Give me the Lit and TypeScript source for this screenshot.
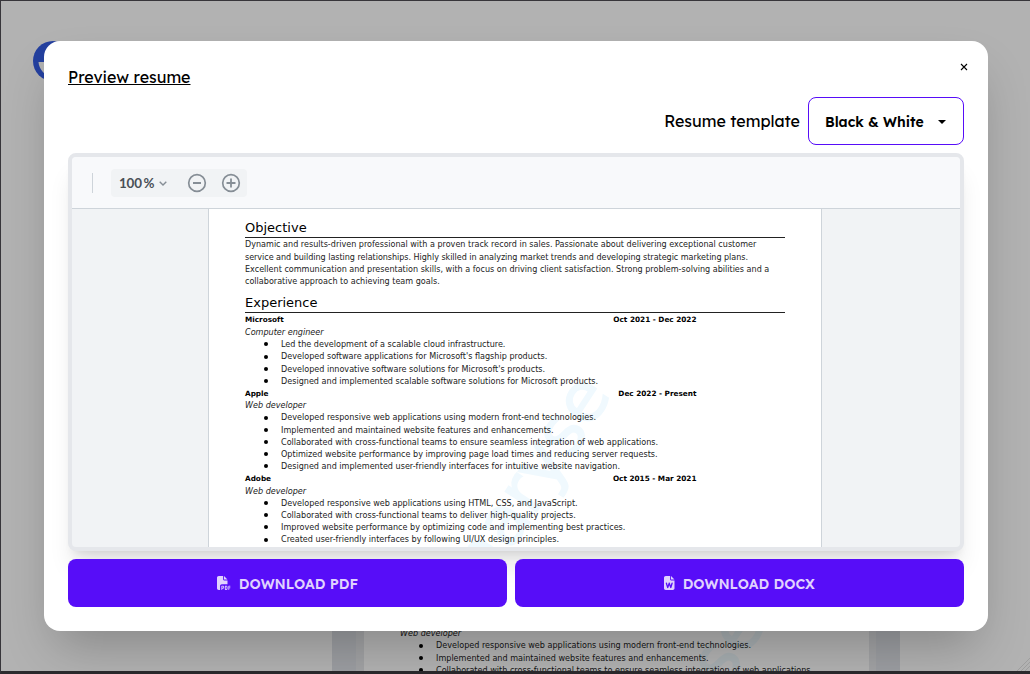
import { LitElement, html, css } from "lit";
import { customElement, property } from "lit/decorators.js";

interface Job { company: string; dates: string; role: string; points: string[]; }

const OBJECTIVE = [
  "Dynamic and results-driven professional with a proven track record in sales. Passionate about delivering exceptional customer",
  "service and building lasting relationships. Highly skilled in analyzing market trends and developing strategic marketing plans.",
  "Excellent communication and presentation skills, with a focus on driving client satisfaction. Strong problem-solving abilities and a",
  "collaborative approach to achieving team goals.",
];

const JOBS: Job[] = [
  {
    company: "Microsoft", dates: "Oct 2021 - Dec 2022", role: "Computer engineer",
    points: [
      "Led the development of a scalable cloud infrastructure.",
      "Developed software applications for Microsoft's flagship products.",
      "Developed innovative software solutions for Microsoft's products.",
      "Designed and implemented scalable software solutions for Microsoft products.",
    ],
  },
  {
    company: "Apple", dates: "Dec 2022 - Present", role: "Web developer",
    points: [
      "Developed responsive web applications using modern front-end technologies.",
      "Implemented and maintained website features and enhancements.",
      "Collaborated with cross-functional teams to ensure seamless integration of web applications.",
      "Optimized website performance by improving page load times and reducing server requests.",
      "Designed and implemented user-friendly interfaces for intuitive website navigation.",
    ],
  },
  {
    company: "Adobe", dates: "Oct 2015 - Mar 2021", role: "Web developer",
    points: [
      "Developed responsive web applications using HTML, CSS, and JavaScript.",
      "Collaborated with cross-functional teams to deliver high-quality projects.",
      "Improved website performance by optimizing code and implementing best practices.",
      "Created user-friendly interfaces by following UI/UX design principles.",
    ],
  },
];

const PDF_ICON = "M0 64C0 28.7 28.7 0 64 0H224V128c0 17.7 14.3 32 32 32H384V304H176c-35.3 0-64 28.7-64 64V512H64c-35.3 0-64-28.7-64-64V64zm384 64H256V0L384 128zM176 352h32c30.9 0 56 25.1 56 56s-25.1 56-56 56H192v32c0 8.8-7.2 16-16 16s-16-7.2-16-16V448 368c0-8.8 7.2-16 16-16zm32 80c13.3 0 24-10.7 24-24s-10.7-24-24-24H192v48h16zm96-80h32c26.5 0 48 21.5 48 48v64c0 26.5-21.5 48-48 48H304c-8.8 0-16-7.2-16-16V368c0-8.8 7.2-16 16-16zm32 128c8.8 0 16-7.2 16-16V400c0-8.8-7.2-16-16-16H320v96h16zm80-112c0-8.8 7.2-16 16-16h48c8.8 0 16 7.2 16 16s-7.2 16-16 16H448v32h32c8.8 0 16 7.2 16 16s-7.2 16-16 16H448v48c0 8.8-7.2 16-16 16s-16-7.2-16-16V432 368z";
const WORD_ICON = "M64 0C28.7 0 0 28.7 0 64V448c0 35.3 28.7 64 64 64H320c35.3 0 64-28.7 64-64V160H256c-17.7 0-32-14.3-32-32V0H64zM256 0V128H384L256 0zM111 257.1l26.8 89.2 31.6-90.3c3.4-9.6 12.5-16.1 22.7-16.1s19.3 6.4 22.7 16.1l31.6 90.3L273 257.1c3.8-12.7 17.2-19.9 29.9-16.1s19.9 17.2 16.1 29.9l-48 160c-3 10-12.1 16.9-22.4 17.1s-19.8-6.2-23.2-16.1L192 336.6l-33.3 95.3c-3.4 9.8-12.8 16.3-23.2 16.1s-19.5-7.1-22.4-17.1l-48-160c-3.8-12.7 3.4-26.1 16.1-29.9s26.1 3.4 29.9 16.1z";

@customElement("resume-job")
class ResumeJob extends LitElement {
  @property({ attribute: false }) job!: Job;
  static styles = css`
    :host { display: block; font: 8.08px/12.2px "DejaVu Sans", sans-serif; white-space: nowrap; color: #1b1b1b; }
    .head { display: flex; justify-content: space-between; width: 451.5px; padding-top: .7px; margin-bottom: -.7px; font: bold 7.3px/12.2px "DejaVu Sans", sans-serif; color: #000; }
    .role { font-style: italic; }
    ul { margin: 0; padding: 0; list-style: none; }
    li { display: flex; align-items: center; gap: 13px; padding-left: 19px; }
    li::before { content: ""; width: 4px; height: 4px; border-radius: 50%; background: #000; }
  `;
  render() {
    return html`
      <div class="head"><span>${this.job.company}</span><span>${this.job.dates}</span></div>
      <div class="role">${this.job.role}</div>
      <ul>${this.job.points.map((p) => html`<li>${p}</li>`)}</ul>`;
  }
}

@customElement("resume-page")
class ResumePage extends LitElement {
  static styles = css`
    :host { display: block; position: relative; box-sizing: border-box; width: 612px; padding: 9px 36px 0; background: #fff; overflow: hidden; }
    h2 { position: relative; margin: 0; font: 13px/19px "DejaVu Sans", sans-serif; color: #000; border-bottom: 1px solid #222; }
    .copy { position: relative; font: 8.07px/12.2px "DejaVu Sans", sans-serif; color: #1b1b1b; white-space: nowrap; padding: 1.4px 0 4.8px; }
    .copy div:nth-child(2) { letter-spacing: -.04px; }
    .jobs { position: relative; padding-top: .8px; }
    .mark { position: absolute; left: 0; top: 0; width: 612px; height: 760px; }
    .mark text { font: 68px "DejaVu Sans", sans-serif; fill: #f0f9fe; stroke: #f0f9fe; stroke-width: 1.5px; text-anchor: end; }
  `;
  render() {
    return html`
      <svg class="mark" viewBox="0 0 612 760"><text transform="translate(403.5 186) rotate(-57)">maryse</text></svg>
      <h2>Objective</h2>
      <div class="copy">${OBJECTIVE.map((l) => html`<div>${l}</div>`)}</div>
      <h2>Experience</h2>
      <div class="jobs">${JOBS.map((j) => html`<resume-job .job=${j}></resume-job>`)}</div>`;
  }
}

@customElement("app-root")
class AppRoot extends LitElement {
  static styles = css`
    :host { display: block; position: relative; box-sizing: border-box; width: 1030px; height: 674px; overflow: hidden; background: #fff; font-family: "Lexend", "Lato", sans-serif; color: #000; }
    .shade { position: absolute; inset: 0; background: rgba(0,0,0,.3); border: solid #37353a; border-width: 1px 0 3px 1px; border-bottom-color: #2b2a2d; box-sizing: border-box; }
    .logo { position: absolute; left: 33px; top: 41px; width: 40px; height: 40px; }
    .grip { position: absolute; right: 0; bottom: 3px; width: 13px; height: 13px; }
    .under { position: absolute; left: 332px; top: 300px; width: 568px; height: 371px; display: flex; background: #e0e2e8; overflow: hidden; }
    .gap { box-sizing: border-box; flex: 0 0 32px; border-right: 8px solid #e8eaed; }
    .edge { flex: 0 0 7px; background: #e8eaed; }
    .clip { width: 505px; height: 371px; overflow: hidden; display: flex; align-items: flex-start; }
    .under resume-page { flex: none; margin-top: 137px; }
    .modal { position: absolute; left: 44px; top: 41px; width: 944px; height: 590px; box-sizing: border-box; padding: 24px; border-radius: 16px; background: #fff; box-shadow: 0 25px 50px -12px rgba(0,0,0,.25); display: flex; flex-direction: column; }
    .top { display: flex; justify-content: space-between; height: 32px; }
    .title { font-size: 16px; line-height: 24px; text-decoration: underline; }
    .close { width: 8px; height: 8px; margin: -2px -4px 0 0; }
    .pick { display: flex; align-items: center; justify-content: flex-end; gap: 8px; height: 48px; }
    .label { font-size: 16px; line-height: 24px; }
    .select { box-sizing: border-box; width: 156px; height: 48px; border: 1px solid #570df8; border-radius: 8px; display: flex; align-items: center; justify-content: space-between; padding: 1px 17px 0 16px; font-weight: 600; font-size: 14px; }
    .viewer { margin-top: 8px; box-sizing: border-box; height: 398px; border: 4px solid #e5e7eb; border-radius: 8px; background: #f1f3f5; box-shadow: 0 20px 25px -5px rgba(0,0,0,.1), 0 8px 10px -6px rgba(0,0,0,.1); display: flex; flex-direction: column; overflow: hidden; }
    .bar { box-sizing: border-box; flex: 0 0 52px; background: #f8f9fb; border-bottom: 1px solid #ced4da; display: flex; align-items: center; padding-left: 20px; }
    .rule { width: 1px; height: 20px; background: #ced4da; margin-right: 18px; }
    .zoom { display: flex; align-items: center; width: 136px; height: 28px; border-radius: 4px; background: #f1f3f5; box-sizing: border-box; padding-left: 8px; color: #495057; font: 700 13.4px "Lato", sans-serif; }
    .zoom svg { flex: none; fill: none; stroke: #868e96; }
    .pct { flex: 0 0 40px; word-spacing: -1.3px; letter-spacing: -.2px; white-space: nowrap; }
    .minus { margin-left: 20px; }
    .plus { margin-left: 14px; }
    .sheet { display: flex; justify-content: center; flex: 1; min-height: 0; overflow: hidden; padding-right: 2px; }
    .sheet resume-page { box-shadow: 0 0 0 1px #ced4da; flex: none; height: 400px; }
    .buttons { display: flex; gap: 8px; margin-top: 8px; }
    .btn { box-sizing: border-box; height: 48px; padding-top: 1px; border-radius: 8px; background: #570df8; color: #e0d2fe; display: flex; align-items: center; justify-content: center; gap: 8px; font-weight: 600; font-size: 14px; }
    .btn svg { fill: #e0d2fe; margin-top: -2px; }
    .pdf { width: 439px; }
    .docx { width: 449px; }
  `;
  render() {
    return html`
      <div class="under"><div class="gap"></div><div class="clip"><resume-page></resume-page></div><div class="edge"></div></div>
      <svg class="logo" viewBox="0 0 40 40"><circle cx="20" cy="20" r="20" fill="#345ce4"/><path d="M5.5 21h20v20C12 35 6 29 5.5 21" fill="#fff"/></svg>
      <div class="shade"></div>
      <svg class="grip" viewBox="0 0 13 13"><path d="M0 13L13 0M4 13l9-9M8 13l5-5" stroke="#999" stroke-width=".8" fill="none"/></svg>
      <div class="modal">
        <div class="top"><span class="title">Preview resume</span>
          <svg class="close" viewBox="0 0 8 8"><path d="M1 1l6 6M7 1L1 7" stroke="#000" stroke-width="1.1"/></svg></div>
        <div class="pick"><span class="label">Resume template</span>
          <div class="select"><span>Black &amp; White</span><svg width="8" height="4"><path d="M0 0h8L4 4z"/></svg></div></div>
        <div class="viewer">
          <div class="bar"><div class="rule"></div>
            <div class="zoom"><span class="pct">100 %</span>
              <svg width="8" height="6" viewBox="0 0 8 6"><path d="M.7 1.7L4 5l3.3-3.3" stroke-width="1.4"/></svg>
              <svg class="minus" width="20" height="20" viewBox="0 0 20 20"><circle cx="10" cy="10" r="8.3" stroke-width="1.7"/><path d="M6 10h8" stroke-width="1.8"/></svg>
              <svg class="plus" width="20" height="20" viewBox="0 0 20 20"><circle cx="10" cy="10" r="8.3" stroke-width="1.7"/><path d="M5.5 10h9M10 5.5v9" stroke-width="1.8"/></svg>
            </div></div>
          <div class="sheet"><resume-page></resume-page></div>
        </div>
        <div class="buttons">
          <div class="btn pdf"><svg width="14" height="14" viewBox="0 0 512 512"><path d=${PDF_ICON}></path></svg><span>DOWNLOAD PDF</span></div>
          <div class="btn docx"><svg width="10.5" height="14" viewBox="0 0 384 512"><path d=${WORD_ICON}></path></svg><span>DOWNLOAD DOCX</span></div>
        </div>
      </div>`;
  }
}
